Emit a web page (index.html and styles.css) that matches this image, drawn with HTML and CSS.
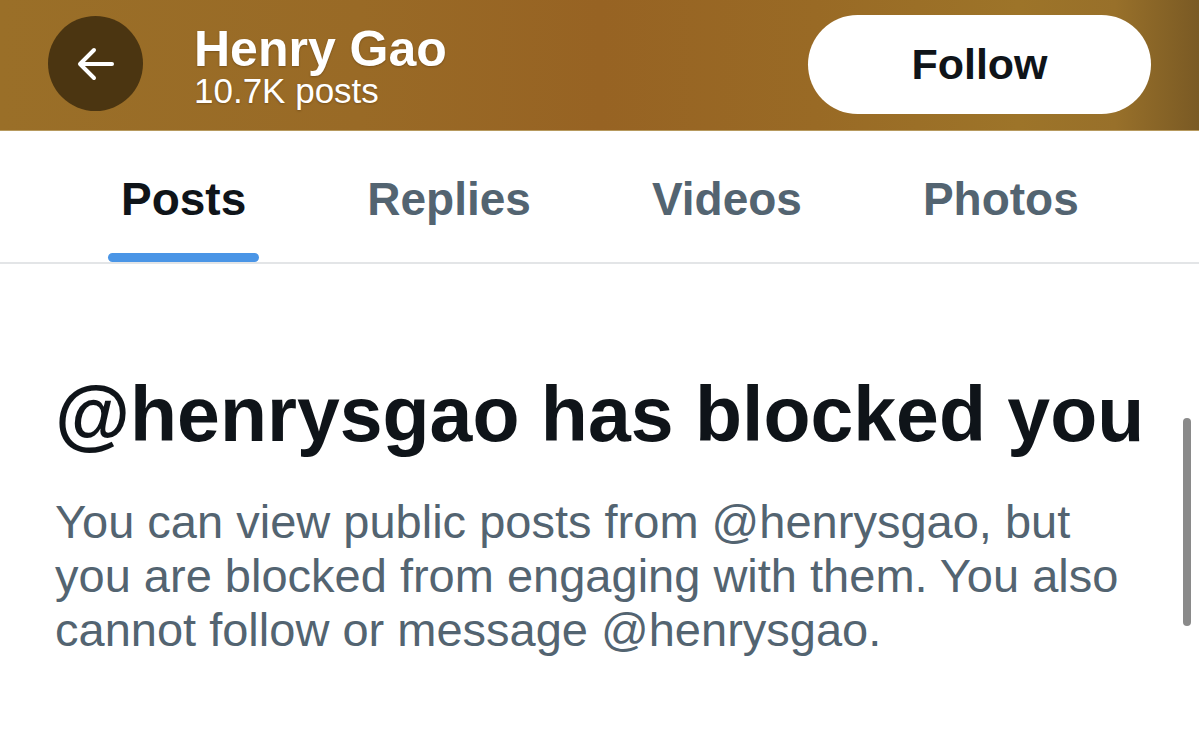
FILE: index.html
```html
<!DOCTYPE html>
<html lang="en">
<head>
<meta charset="utf-8">
<title>Henry Gao</title>
<link rel="stylesheet" href="styles.css">
</head>
<body>
<div class="page">
  <header class="topbar">
    <button class="back" aria-label="Back">
      <svg width="40" height="36" viewBox="0 0 40 36" fill="none" stroke="#fff" stroke-width="4" stroke-linecap="round" stroke-linejoin="round">
        <path d="M36 18H5"/>
        <path d="M18 4L4 18L18 32"/>
      </svg>
    </button>
    <div class="title">
      <div class="name">Henry Gao</div>
      <div class="count">10.7K posts</div>
    </div>
    <button class="follow">Follow</button>
  </header>

  <nav class="tabs">
    <div class="tab active"><span class="label">Posts</span><span class="indicator"></span></div>
    <div class="tab"><span class="label">Replies</span><span class="indicator"></span></div>
    <div class="tab"><span class="label">Videos</span><span class="indicator"></span></div>
    <div class="tab"><span class="label">Photos</span><span class="indicator"></span></div>
  </nav>

  <main class="blocked">
    <h1 class="heading">@henrysgao has blocked you</h1>
    <p class="desc">You can view public posts from @henrysgao, but you are blocked from engaging with them. You also cannot follow or message @henrysgao.</p>
  </main>

  <div class="scrollbar"></div>
</div>
</body>
</html>
```

FILE: styles.css
```css
* { box-sizing: border-box; }

html, body {
  margin: 0;
  padding: 0;
  background: #ffffff;
}

body {
  font-family: "Liberation Sans", Arial, sans-serif;
  width: 1199px;
  height: 738px;
  overflow: hidden;
}

.page {
  position: relative;
  height: 738px;
}

.topbar {
  height: 131px;
  display: flex;
  align-items: center;
  padding: 0 48px 0 48px;
  background: linear-gradient(90deg, #9a6f28 0%, #996a26 30%, #976323 50%, #996a25 68%, #9d7429 85%, #98702a 93%, #7a5a24 100%);
  border-bottom: 1px solid #b79a5e;
}

.back {
  width: 95px;
  height: 95px;
  border-radius: 50%;
  border: none;
  background: #4b3511;
  display: flex;
  align-items: center;
  justify-content: center;
  padding: 0;
  margin-top: -3px;
  flex: none;
}

.back svg { display: block; }

.title {
  margin-left: 51px;
  color: #ffffff;
  display: flex;
  flex-direction: column;
  margin-top: 4px;
  text-shadow: 0 1px 2px rgba(60, 35, 5, 0.35);
}

.name {
  font-size: 50px;
  font-weight: 700;
  line-height: 48px;
}

.count {
  font-size: 35px;
  line-height: 36px;
  font-weight: 400;
}

.follow {
  margin-left: auto;
  width: 343px;
  height: 99px;
  border: none;
  border-radius: 50px;
  background: #ffffff;
  color: #0f1419;
  font-family: "Liberation Sans", Arial, sans-serif;
  font-size: 43px;
  font-weight: 700;
  padding: 0;
  margin-top: -1px;
}

.tabs {
  display: flex;
  gap: 95px;
  padding-left: 108px;
  border-bottom: 2px solid #e3e5e7;
  height: 133px;
}

.tab {
  display: flex;
  flex-direction: column;
  align-items: stretch;
  padding-top: 42px;
}

.label {
  display: block;
  padding: 0 13px;
  font-size: 46px;
  font-weight: 700;
  line-height: 52px;
  color: #536471;
  white-space: nowrap;
}

.tab.active .label { color: #0f1419; }

.indicator {
  display: block;
  height: 9px;
  margin-top: 28px;
  border-radius: 5px;
  background: transparent;
}

.tab.active .indicator { background: #4a95e6; }

.blocked {
  padding: 110px 55px 0 55px;
}

.heading {
  margin: 0;
  font-size: 77px;
  line-height: 80px;
  font-weight: 700;
  color: #0f1419;
  white-space: nowrap;
}

.desc {
  margin: 41px 0 0 0;
  width: 1085px;
  font-size: 47px;
  line-height: 54px;
  color: #536471;
}

.scrollbar {
  position: absolute;
  left: 1183px;
  top: 418px;
  width: 8px;
  height: 208px;
  border-radius: 4px;
  background: #8a8a8a;
}
```
